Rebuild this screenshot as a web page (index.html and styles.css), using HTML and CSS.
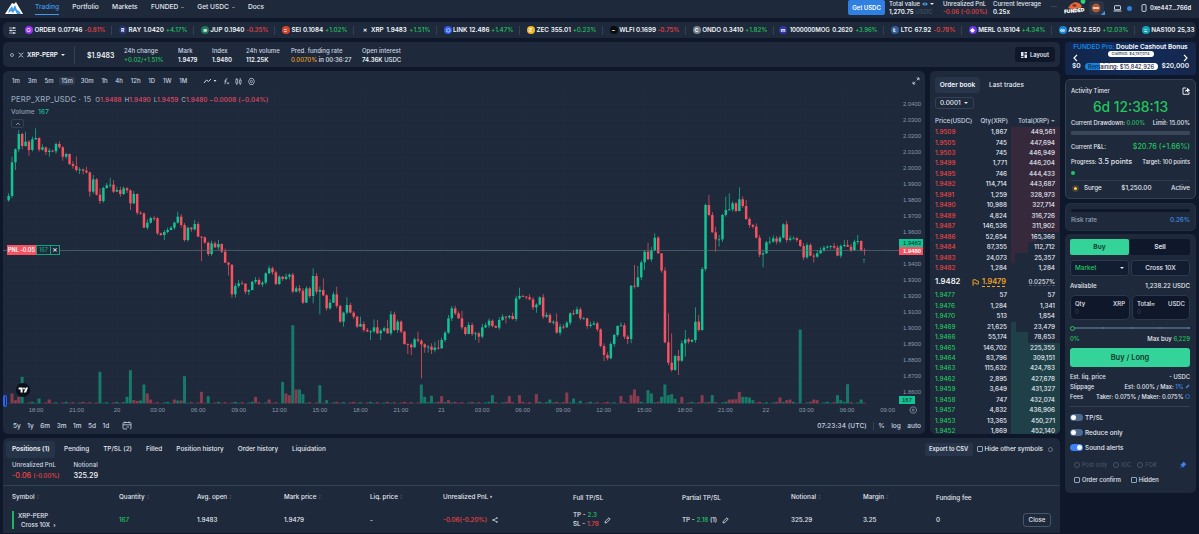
FILE: index.html
```
<!DOCTYPE html>
<html lang="en">
<head>
    <meta charset="UTF-8">
    <meta name="viewport" content="width=device-width, initial-scale=1.0">
    <title>XRP-PERP | Trading</title>
    <link rel="stylesheet" href="styles.css">
</head>
<body>
    <header class="topbar">
        <svg class="logo" viewBox="0 0 18 12"><path d="M0 12 7 1l2 1 2-2 7 12z" fill="#fff"/><path d="M4 8l3-4 1 3 2-4 2 5 2 1 2 3H3z" fill="#3f9bea"/><path d="M2 12l4-3 2 2 2-3 2 4z" fill="#fff"/></svg>
        <nav class="nav">
            <a class="active">Trading</a>
            <a>Portfolio</a>
            <a>Markets</a>
            <a>FUNDED <i class="chev"></i></a>
            <a>Get USDC <i class="chev"></i></a>
            <a>Docs</a>
        </nav>
        <button class="get-usdc">Get USDC</button>
        <div class="stats">
            <div><span>Total value <svg class="eye" viewBox="0 0 10 6"><ellipse cx="5" cy="3" rx="4.5" ry="2.7" fill="#4a9bea"/><circle cx="5" cy="3" r="1.2" fill="#1e293b"/></svg> <i class="caret"></i></span><b>1,270.75 <em>USDC</em></b></div>
            <div><span>Unrealized PnL</span><b class="red">-0.06 (-0.00%)</b></div>
            <div><span>Current leverage</span><b>0.25x</b></div>
        </div>
        <span class="more">···</span>
        <svg class="fox" viewBox="0 0 22 15"><path d="M4 8 7 4l4-2 4 1 3 3-2 3-3-1-3 2z" fill="#e5673c"/><path d="M8 5l3-1 2 2-3 1z" fill="#7b2f1d"/><circle cx="19" cy="1.5" r="2.4" fill="#2fd07d"/><text x="0" y="13" transform="rotate(-6 6 12)">FUNDED</text></svg>
        <div class="account">
            <svg class="avatar" viewBox="0 0 18 16"><rect x="1" y="1" width="15" height="14" rx="3" fill="#2b3547"/><circle cx="8" cy="8" r="4.4" fill="#a85a3a"/><path d="M5 7h6v2H5z" fill="#f0c4a0"/><path d="M17 11v4h-4z" fill="#4a9bea"/></svg>
            <svg class="laptop" viewBox="0 0 9 7"><rect x="1.5" y=".7" width="6" height="4" rx=".6" fill="none" stroke="#e2e8f0" stroke-width=".9"/><path d="M.5 6h8" stroke="#e2e8f0" stroke-width=".9"/></svg>
            <i class="net"></i>
            <svg class="phone" viewBox="0 0 6 8"><rect x="1" y=".6" width="4" height="6.8" rx=".8" fill="none" stroke="#e2e8f0" stroke-width=".9"/></svg>
            <b>0xe447...766d</b>
        </div>
    </header>

    <section class="ticker" id="ticker">
        <svg class="sliders" viewBox="0 0 7 7"><path d="M0 1h7M0 3.5h7M0 6h7" stroke="#cbd5e1" stroke-width=".8"/><path d="M4.8 0v2M2 2.5v2M4.8 5v2" stroke="#fff" stroke-width="1"/></svg>
    </section>

    <main class="layout">
        <div class="left">
            <section class="panel market">
                <span class="fav"></span>
                <span class="pair"><svg viewBox="0 0 6 6"><path d="M.6.6Q3 4 5.4.6M.6 5.4Q3 2 5.4 5.4" stroke="#cbd5e1" stroke-width=".8" fill="none"/></svg><b>XRP-PERP</b><i class="caret"></i></span>
                <b class="last">$1.9483</b>
                <div><span>24h change</span><span class="green">+0.02/+1.51%</span></div>
                <div><span>Mark</span><b>1.9479</b></div>
                <div><span>Index</span><b>1.9480</b></div>
                <div><span>24h volume</span><b>112.25K</b></div>
                <div><span>Pred. funding rate</span><span><em class="orange">0.0070%</em> in 00:36:27</span></div>
                <div><span>Open interest</span><span><b>74.36K</b> USDC</span></div>
                <button class="layout-btn"><svg viewBox="0 0 6 6"><path d="M0 0h2.5v4H0zM0 4.8h2.5V6H0zM3.5 0H6v1.6H3.5zM3.5 2.6H6V6H3.5z" fill="#e2e8f0"/></svg>Layout</button>
            </section>

            <div class="middle">
                <section class="panel chart">
                    <div class="toolbar">
                        <div class="frames"><span>1m</span><span>3m</span><span>5m</span><span class="on">15m</span><span>30m</span><span>1h</span><span>4h</span><span>12h</span><span>1D</span><span>1W</span><span>1M</span></div>
                        <div class="tools">
                            <svg class="t-line" viewBox="0 0 14 8"><path d="M1 6l2.5-3 2 1.5L8 2" fill="none" stroke="#cbd5e1" stroke-width="1"/><path d="M10.5 3h3L12 5z" fill="#cbd5e1"/></svg>
                            <svg viewBox="0 0 8 8"><path d="M5 .8Q3.2.4 3 2.5L2.2 7M1.5 3.5h2.8M4.8 5l2 2M6.8 5l-2 2" fill="none" stroke="#cbd5e1" stroke-width=".9"/></svg>
                            <svg viewBox="0 0 8 8"><path d="M2 0v8M6 0v8" stroke="#cbd5e1" stroke-width=".8"/><path d="M1 1.5h2v4.5H1zM5 2.5h2V6H5z" fill="#1e293b" stroke="#cbd5e1" stroke-width=".8"/></svg>
                            <svg viewBox="0 0 8 8"><path d="M2.3.6h3.4L7.5 4 5.7 7.4H2.3L.5 4z" fill="none" stroke="#cbd5e1" stroke-width=".8"/><circle cx="4" cy="4" r="1.3" fill="none" stroke="#cbd5e1" stroke-width=".8"/></svg>
                        </div>
                        <svg class="expand" viewBox="0 0 8 8"><path d="M4.8 3.2 7 1M4.8 1H7v2.2M3.2 4.8 1 7M1 4.8V7h2.2" fill="none" stroke="#cbd5e1" stroke-width=".9"/></svg>
                    </div>
                    <div class="plot">
                        <svg id="candles" width="922" height="327" viewBox="3 92 922 327"></svg>
                        <div class="legend">
                            <p class="ohlc"><span class="sym">PERP_XRP_USDC · 15</span> <i>O</i>1.9488 <i>H</i>1.9490 <i>L</i>1.9459 <i>C</i>1.9480 −0.0008 (−0.04%)</p>
                            <p class="vol">Volume <b>167</b></p>
                            <span class="fold"><svg viewBox="0 0 6 4"><path d="M1 3l2-2 2 2" fill="none" stroke="#94a3b8" stroke-width=".8"/></svg></span>
                        </div>
                        <div class="pnl-tag"><b>PNL -0.05</b><span>167</span><span class="x">×</span></div>
                        <svg class="tv" viewBox="0 0 14 14"><circle cx="7" cy="7" r="7" fill="#0b0f18"/><path d="M2.6 4.6h4v5h-2V6.4h-2z" fill="#fff"/><circle cx="8" cy="5.6" r="1" fill="#fff"/><path d="M9.8 4.6h2.3L10 9.6H7.8z" fill="#fff"/></svg>
                        <span class="handle"></span>
                    </div>
                    <div class="ranges">
                        <span>5y</span><span>1y</span><span>6m</span><span>3m</span><span>1m</span><span>5d</span><span>1d</span>
                        <svg viewBox="0 0 10 9"><path d="M5 8H2Q1 8 1 7V2.5Q1 1.5 2 1.5h6q1 0 1 1V7Q9 8 8 8M1 3.8h8M3 .4v2M7 .4v2M4.5 6H7" fill="none" stroke="#cbd5e1" stroke-width=".8"/></svg>
                        <span class="clock">07:23:34 (UTC)</span><span class="pct">%</span><span>log</span><span>auto</span>
                    </div>
                </section>

                <section class="panel book">
                    <div class="book-tabs"><b>Order book</b><span>Last trades</span></div>
                    <div class="tick">0.0001 <i class="caret"></i></div>
                    <div class="book-row head"><span>Price(USDC)</span><span>Qty(XRP)</span><span>Total(XRP) <i class="caret dim"></i></span></div>
                    <div id="asks"></div>
                    <div class="mid"><b>1.9482</b><span class="flag"><svg viewBox="0 0 7 7"><path d="M1 7V.8h3L4.6 2H6.4v3H4L3.5 4H1" fill="none" stroke="#f5a524" stroke-width=".9"/></svg><u>1.9479</u></span><em>0.0257%</em></div>
                    <div id="bids"></div>
                </section>
            </div>

            <section class="panel positions">
                <div class="tabs">
                    <b>Positions (1)</b><span>Pending</span><span>TP/SL (2)</span><span>Filled</span><span>Position history</span><span>Order history</span><span>Liquidation</span>
                    <button class="csv">Export to CSV</button>
                    <label><i class="box"></i>Hide other symbols</label><i class="ring"></i>
                </div>
                <div class="summary">
                    <div><span>Unrealized PnL</span><b class="red">-0.06 <small>(-0.00%)</small></b></div>
                    <div><span>Notional</span><b>325.29</b></div>
                </div>
                <div class="row th">
                    <span>Symbol <i>↕</i></span><span>Quantity <i>↕</i></span><span>Avg. open <i>↕</i></span><span>Mark price <i>↕</i></span><span>Liq. price <i>↕</i></span><span>Unrealized PnL <small>♦</small></span><span>Full TP/SL</span><span>Partial TP/SL</span><span>Notional <i>↕</i></span><span>Margin <i>↕</i></span><span>Funding fee</span>
                </div>
                <div class="row td">
                    <div class="symbol"><span>XRP-PERP</span><span>Cross 10X &nbsp;›</span></div>
                    <span class="green">167</span>
                    <span>1.9483</span>
                    <span>1.9479</span>
                    <span>-</span>
                    <span><em class="red">-0.06(-0.20%)</em><svg class="share" viewBox="0 0 6 6"><path d="M5 1 1.2 3 5 5" fill="none" stroke="#cbd5e1" stroke-width=".8"/><circle cx="5" cy="1" r=".8" fill="#cbd5e1"/><circle cx="1" cy="3" r=".8" fill="#cbd5e1"/><circle cx="5" cy="5" r=".8" fill="#cbd5e1"/></svg></span>
                    <div class="tpsl"><div><span>TP - <em class="green">2.3</em></span><span>SL - <em class="red">1.78</em></span></div><svg viewBox="0 0 7 7"><path d="M1 6l.4-1.8L5 .8 6.2 2 2.8 5.6z" fill="none" stroke="#e2e8f0" stroke-width=".8"/></svg></div>
                    <div class="tpsl"><span>TP - <em class="green">2.18</em> (1)</span><svg viewBox="0 0 7 7"><path d="M1 6l.4-1.8L5 .8 6.2 2 2.8 5.6z" fill="none" stroke="#e2e8f0" stroke-width=".8"/></svg></div>
                    <span>325.29</span>
                    <span>3.25</span>
                    <span>0</span>
                    <button class="close">Close</button>
                </div>
            </section>
        </div>

        <aside class="right">
            <section class="promo">
                <p><span>FUNDED Pro:</span> Double Cashout Bonus</p>
                <div class="promo-mid">
                    <svg viewBox="0 0 5 8"><path d="M4 .8 1 4l3 3.2" fill="none" stroke="#fff" stroke-width="1.2"/></svg>
                    <em>Claimed: $4,157,074</em>
                    <svg viewBox="0 0 5 8"><path d="M1 .8 4 4 1 7.2" fill="none" stroke="#fff" stroke-width="1.2"/></svg>
                </div>
                <div class="promo-bar"><b>$0</b><span>Remaining: $15,842,926</span><b>$20,000</b></div>
            </section>

            <section class="panel timer">
                <div class="line t-head"><span>Activity Timer</span><svg viewBox="0 0 8 8"><path d="M4 1H1v6.3h6V5" fill="none" stroke="#e2e8f0" stroke-width="1"/><path d="M3 5Q3 2.5 5 2.5V.8L8 3.3 5 5.5V4Q4 4 3 5z" fill="#fff"/></svg></div>
                <p class="count">6d 12:38:13</p>
                <div class="line dd"><span>Current Drawdown: <em class="green">0.00%</em></span><span>Limit: 15.00%</span></div>
                <div class="track"></div>
                <div class="line pl"><span>Current P&amp;L:</span><em class="green">$20.76 (+1.66%)</em></div>
                <div class="line prog"><span>Progress: <big>3.5 points</big></span><span>Target: 100 points</span></div>
                <i class="dot"></i>
                <div class="line surge"><span><i class="coin"></i>Surge</span><span>$1,250.00</span><span>Active</span></div>
            </section>

            <section class="panel risk">
                <div class="risk-bar"></div>
                <div class="line"><span>Risk rate</span><em class="blue">0.26%</em></div>
            </section>

            <section class="panel order">
                <div class="side"><button class="buy">Buy</button><button>Sell</button></div>
                <div class="pick"><span class="green">Market <i class="caret"></i></span><span>Cross 10X</span></div>
                <div class="line avail"><span>Available</span><span>1,238.22 USDC</span></div>
                <div class="inputs">
                    <div><span>Qty</span><span>XRP</span><em>0</em></div>
                    <div><span>Total≈</span><span>USDC</span><em>0</em></div>
                </div>
                <div class="slider"><i></i><s></s><s></s><s></s><s></s></div>
                <div class="line maxbuy"><em class="green">0%</em><span>Max buy <em class="green">6,229</em></span></div>
                <button class="long">Buy / Long</button>
                <div class="line fee"><span>Est. liq. price</span><span>- USDC</span></div>
                <div class="line fee"><span>Slippage</span><span>Est: 0.00% / Max: <em class="blue">1%</em> <svg class="edit" viewBox="0 0 7 7"><path d="M1 6l.4-1.8L5 .8 6.2 2 2.8 5.6z" fill="#3f8fe6"/></svg></span></div>
                <div class="line fee"><span>Fees</span><span>Taker: 0.075% / Maker: 0.075% <i class="ring blue"></i></span></div>
                <div class="toggles">
                    <label><i class="sw"></i>TP/SL</label>
                    <label><i class="sw"></i>Reduce only</label>
                    <label><i class="sw on"></i>Sound alerts</label>
                </div>
                <div class="tif"><label><i></i>Post only</label><label><i></i>IOC</label><label><i></i>FOK</label><svg viewBox="0 0 8 8"><path d="M4.5.5l3 3-1 .3-1.3 1.4-.2 1.6-1.6-1.5L.8 7.5 2.7 4.6 1.2 3l1.6-.2L4.2 1.5z" fill="#3b82f6"/></svg></div>
                <div class="checks"><label><i class="box"></i>Order confirm</label><label><i class="box"></i>Hidden</label></div>
            </section>
        </aside>
    </main>
    <script src="script.js"></script>
</body>
</html>
```
FILE: styles.css
```
* {
    box-sizing: border-box;
    margin: 0;
    padding: 0;
}

body {
    width: 1199px;
    height: 534px;
    overflow: hidden;
    background-color: #0f172a;
    color: #e2e8f0;
    font-family: Inter, "Liberation Sans", sans-serif;
    font-size: 6.4px;
    font-weight: 500;
    line-height: 8px;
    white-space: nowrap;
}

i, em { font-style: normal; }
b { font-weight: 600; color: #f1f5f9; }
svg { display: block; flex: none; }
button {
    border: 0;
    background: none;
    font: inherit;
    font-weight: 600;
    color: inherit;
    display: flex;
    align-items: center;
    justify-content: center;
}

.green { color: #22c55e; }
.red { color: #ef4444; }
.orange { color: #f5a524; }
.blue { color: #3f8fe6; }

.caret {
    display: inline-block;
    border: 2px solid transparent;
    border-top: 2.5px solid #e2e8f0;
    border-bottom: 0;
    vertical-align: middle;
}
.caret.dim { border-top-color: #94a3b8; }

.panel {
    background-color: #1e293b;
    border-radius: 5px;
}

/* top bar */
.topbar {
    display: flex;
    height: 18px;
    padding-left: 5px;
    background-color: #1e293b;
}
.logo { width: 18px; height: 12px; margin-top: 2px; }
.nav { display: flex; gap: 13.3px; margin-left: 12px; width: 813px; }
.nav a { height: 15px; line-height: 15px; font-size: 6.6px; color: #e2e8f0; }
.nav .active { color: #3f9bea; border-bottom: 1px solid #3f9bea; }
.chev {
    display: inline-block;
    width: 3px;
    height: 1px;
    margin-left: 1px;
    background-color: #64748b;
    vertical-align: middle;
}
.get-usdc {
    width: 37px;
    height: 15px;
    border-radius: 2px;
    background-color: #2f80e0;
    color: #fff;
    font-size: 6px;
}
.stats { display: grid; grid-template-columns: 54px 50px 58px; margin-left: 4px; font-size: 6px; }
.stats div { display: flex; flex-direction: column; }
.stats span { line-height: 8px; display: flex; align-items: center; gap: 2px; }
.stats b { line-height: 8px; font-size: 6.1px; }
.stats b.red { color: #ef4444; font-weight: 500; }
.stats em { color: #3d4a5f; }
.eye { width: 6px; height: 4px; }
.more { color: #64748b; line-height: 15px; width: 12px; }
.fox { width: 22px; height: 15px; margin-left: 1px; }
.fox text { font: 900 5px Inter, sans-serif; fill: #fff; }
.account { display: flex; align-items: center; height: 16px; width: 110px; margin-left: 2px; }
.avatar { width: 18px; height: 16px; }
.laptop { width: 9px; height: 7px; margin-left: 7px; }
.net { width: 5px; height: 5px; border-radius: 50%; background-color: #2f80e0; margin-left: 5px; }
.phone { width: 6px; height: 8px; margin-left: 9px; }
.account b { margin-left: 3px; font-size: 5.9px; }

/* ticker */
.ticker {
    display: grid;
    grid-template-columns: 14px 94px 82px 81px 79px 83px 83px 83px 83px 88px 110px 78px 90px 83px 66px;
    align-items: center;
    height: 16px;
    margin: 4px 3px 0;
    overflow: hidden;
    background-color: #1e293b;
    border-radius: 5px;
}
.sliders { width: 7px; height: 7px; margin-left: 6px; }
.coin-item {
    display: flex;
    justify-content: space-between;
    align-items: center;
    height: 9px;
    padding: 0 5.5px 0 6.5px;
    border-left: 1px solid #334155;
    font-size: 6.3px;
    letter-spacing: -.05px;
}
.coin-item:nth-child(2) { border-color: transparent; }
.coin-item:nth-child(11) { font-size: 6px; padding-left: 5px; letter-spacing: -.1px; }
.coin-item span { font-weight: 500; }
.token { width: 8px; height: 8px; border-radius: 50%; display: grid; place-items: center; font-size: 5px; font-weight: 700; color: #fff; }

/* columns */
.layout { display: grid; grid-template-columns: 1057px 131px; gap: 5px; margin: 4px 3px 0; }
.left { display: grid; grid-template-rows: 25px 363px 95px; gap: 4px; }
.middle { display: grid; grid-template-columns: 922px 130px; gap: 5px; }
.right { display: flex; flex-direction: column; }

.market {
    display: grid;
    grid-template-columns: 9px 57px 49px 54px 34px 34px 45px 71px 1fr 40px;
    padding: 4px 5px 0 6px;
    font-size: 6px;
}
.market div { display: flex; flex-direction: column; line-height: 9px; }
.market div > span:first-child { color: #cbd5e1; }
.fav { width: 4px; height: 4px; border: 1px solid #94a3b8; border-radius: 50%; margin: 7px 0 0 1px; }
.pair { display: flex; align-items: center; height: 18px; border-right: 1px solid #334155; }
.pair svg { width: 6px; height: 6px; margin-right: 3px; }
.pair b { margin-right: 3px; font-size: 6.3px; letter-spacing: -.1px; }
.last { line-height: 19px; font-size: 6.9px; padding-left: 12px; }
.layout-btn { height: 15px; margin-top: 1px; border-radius: 3px; background-color: #0f172a; gap: 3px; font-size: 5.8px; }
.layout-btn svg { width: 6px; height: 6px; }

/* chart */
.chart { overflow: hidden; }
.toolbar { display: flex; height: 20px; align-items: center; color: #cbd5e1; padding-left: 9px; }
.frames { display: flex; gap: 7.8px; width: 188px; font-size: 6px; }
.frames .on { background-color: #2d3a4f; border-radius: 2px; padding: 0 2px; margin: 0 -2px; }
.tools { display: flex; gap: 5.5px; align-items: center; flex: 1; padding-left: 3px; }
.tools svg { width: 7px; height: 7px; }
.tools .t-line { width: 14px; height: 8px; }
.expand { width: 8px; height: 8px; margin-right: 5px; }
.plot { position: relative; height: 327px; margin-top: 1px; }
.plot text { font: 400 5.9px "Liberation Sans", sans-serif; fill: #8b99ad; }
.plot text.dark { fill: #06281f; }
.plot text.light { fill: #fff; font-weight: 700; }
.legend { position: absolute; left: 8px; top: 3px; color: #94a3b8; }
.ohlc { font-size: 6.4px; line-height: 10px; color: #e04a68; letter-spacing: .1px; }
.ohlc i { color: #94a3b8; margin-left: 1px; }
.sym { font-size: 7.6px; color: #94a3b8; letter-spacing: .2px; margin-right: 1px; }
.vol { line-height: 14px; letter-spacing: .1px; }
.vol b { color: #14c393; font-weight: 500; margin-left: 2px; }
.fold { display: grid; place-items: center; width: 13px; height: 9px; border: 1px solid #334155; border-radius: 2px; }
.fold svg { width: 6px; height: 4px; }
.pnl-tag { position: absolute; left: 4px; top: 153px; display: flex; height: 10px; font-size: 5.5px; line-height: 8px; text-align: center; }
.pnl-tag b { width: 29px; background-color: #f7525f; color: #fff; line-height: 10px; }
.pnl-tag span { width: 15px; border: 1px solid #14a37f; background-color: #1e293b; color: #14a37f; }
.pnl-tag .x { width: 10px; margin-left: -1px; color: #e2e8f0; font-size: 8px; line-height: 7px; }
.tv { position: absolute; left: 13px; top: 291px; width: 14px; height: 14px; }
.handle { position: absolute; left: 0; top: 303px; width: 4px; height: 12px; border: 1px solid #2962ff; border-left-width: 2px; border-radius: 2px; }
.ranges { display: flex; gap: 6.5px; height: 13px; align-items: center; padding: 0 4px 0 10px; font-size: 6.5px; color: #cbd5e1; }
.ranges svg { width: 10px; height: 9px; margin-left: 6px; }
.clock { margin-left: auto; letter-spacing: .1px; }
.pct { border-left: 1px solid #334155; padding-left: 4px; }

/* order book */
.book { overflow: hidden; padding-top: 6px; }
.book-tabs { display: flex; height: 16px; line-height: 16px; padding-left: 5px; gap: 4px; font-size: 6.6px; }
.book-tabs b { width: 45px; text-align: center; border-radius: 3px; background-color: #273449; }
.book-tabs span { padding-left: 5px; }
.tick { display: flex; align-items: center; justify-content: space-between; width: 39px; height: 12px; margin: 3.5px 0 5px 5px; padding: 0 5px 0 4px; border: 1px solid #334155; border-radius: 3px; }
.book-row { display: grid; grid-template-columns: 39px 33px 53px; height: 10.46px; line-height: 10.4px; padding-left: 5px; font-size: 6.3px; }
.book-row span:nth-child(n+2) { text-align: right; }
.book-row.head { height: 13.6px; line-height: 14px; color: #cbd5e1; font-size: 6.2px; grid-template-columns: 42px 31px 47px; }
.book-row .depth { margin-left: 4px; padding-right: 5px; }
.mid { display: grid; grid-template-columns: 37px 40px 43px; align-items: center; height: 16.8px; padding: 1px 0 0 5px; font-size: 7.7px; }
.flag { display: flex; gap: 3px; align-items: center; color: #f5a524; font-size: 7.4px; font-weight: 600; }
.flag svg { width: 7px; height: 7px; }
.flag u { text-decoration: underline dashed .6px; text-underline-offset: 2px; }
.mid em { justify-self: end; font-size: 6.1px; line-height: 7px; border-bottom: 1px dashed #475569; }

/* positions */
.positions { border-radius: 5px 5px 0 0; }
.tabs { display: flex; align-items: center; height: 22px; padding: 0 7px 0 3px; gap: 14px; font-size: 6.42px; }
.tabs b { height: 17px; line-height: 17px; padding: 0 5px 0 6px; margin-right: -4.5px; border-radius: 3px; background-color: #263449; }
.tabs label { display: flex; align-items: center; gap: 2px; margin-left: -10px; font-size: 6.3px; }
.csv { width: 48px; height: 13px; margin-left: auto; background-color: #283449; border-radius: 2px; font-size: 5.8px; }
.box { display: inline-block; width: 6px; height: 6px; border: 1px solid #94a3b8; border-radius: 1px; }
.ring { display: inline-block; width: 5px; height: 5px; margin-left: -9px; border: 1px solid #64748b; border-radius: 50%; }
.ring.blue { margin: 0; border-color: #2f6fb3; vertical-align: middle; }
.summary { display: flex; gap: 14px; height: 26px; padding: 1px 0 0 9px; border-bottom: 1px solid #334155; }
.summary div { display: flex; flex-direction: column; font-size: 6.1px; color: #cbd5e1; }
.summary b { font-size: 7.3px; line-height: 13px; font-weight: 500; }
.summary b.red { color: #ef4444; }
.summary small { font-size: 6px; }
.row { display: grid; grid-template-columns: 107px 78px 87px 86px 73px 130px 109px 109px 72px 73px 87px 28px; padding-left: 9px; align-items: center; font-size: 6.3px; }
.th { height: 23px; }
.th i { color: #475569; font-size: 4px; vertical-align: middle; }
.th small { font-size: 4px; vertical-align: middle; }
.td { height: 22px; }
.td > span { display: flex; align-items: center; gap: 5px; }
.symbol { display: flex; flex-direction: column; height: 18px; line-height: 9px; padding-left: 4px; border-left: 2px solid #26b35f; font-size: 6.1px; }
.symbol span + span { padding-left: 3px; }
.share { width: 6px; height: 6px; }
.tpsl { display: flex; align-items: center; gap: 5px; }
.tpsl div { display: flex; flex-direction: column; line-height: 9px; }
.tpsl svg { width: 7px; height: 7px; }
.close { height: 14px; border: 1px solid #475569; border-radius: 3px; font-weight: 500; font-size: 6.2px; }

/* right column */
.line { display: flex; justify-content: space-between; align-items: center; }
.promo { height: 33px; border-radius: 3px; background: linear-gradient(90deg, #13264a, #112c5c 60%, #17264a); color: #fff; text-align: center; padding: 1px 7px 0; }
.promo p { font-size: 6.5px; font-weight: 600; line-height: 8px; }
.promo p span { color: #1684e0; }
.promo-mid { display: flex; justify-content: space-between; height: 10px; padding: 0 1px; }
.promo-mid svg { width: 5px; height: 8px; margin-top: 3px; }
.promo-mid em { width: 46px; height: 6px; line-height: 6px; border-radius: 3px; background-color: #fff; color: #334155; font-size: 4px; }
.promo-bar { display: flex; justify-content: space-between; align-items: center; margin-top: 1px; }
.promo-bar b { font-size: 6.6px; }
.promo-bar span { width: 73px; height: 7px; line-height: 7px; border-radius: 4px; background: linear-gradient(90deg, #1684e0 20%, #fff 20%); color: #16233c; font-size: 5.7px; }

.timer { height: 120px; margin-top: 4px; padding: 6px 5px 0; border: 1px solid #334155; font-size: 5.8px; }
.t-head { height: 9px; }
.t-head svg { width: 8px; height: 8px; }
.count { height: 24px; line-height: 24px; text-align: center; font-size: 13.8px; color: #22c55e; }
.dd { height: 8px; }
.track { height: 4px; margin-top: 4px; background-color: #3a475b; border-radius: 1px; }
.pl { height: 10px; margin-top: 7px; }
.pl em { font-size: 7.2px; }
.prog { height: 10px; margin-top: 5px; font-size: 5.6px; }
.prog big { font-size: 7.2px; }
.dot { display: block; width: 4px; height: 4px; margin-top: 4px; border-radius: 50%; background-color: #22c55e; }
.surge { height: 15px; margin-top: 5px; border-top: 1px solid #2c394e; font-size: 6.3px; }
.surge > span:first-child { display: flex; align-items: center; }
.coin { width: 7px; height: 7px; border: 2px solid #453f38; border-radius: 50%; background-color: #ffd43b; margin: 0 5px 0 1px; }

.risk { height: 28px; margin-top: 4px; padding: 5px 5px 0; color: #94a3b8; font-size: 6.3px; border: 1px solid #233047; }
.risk-bar { height: 3px; background-color: #0f172a; border-radius: 2px; margin-bottom: 4px; }

.order { height: 259px; margin-top: 3px; padding: 5px 6px 0 5px; }
.side { display: grid; grid-template-columns: 59px 1fr; gap: 1px; }
.side button { height: 16px; border-radius: 2px; background-color: #0f172a; font-size: 6.6px; }
.side .buy { background-color: #34d399; color: #10382c; }
.pick { display: grid; grid-template-columns: 59px 1fr; gap: 2px; margin-top: 5px; }
.pick span { height: 16px; line-height: 14px; border: 1px solid #2b384d; border-radius: 3px; background-color: #131d31; text-align: center; font-size: 6.4px; }
.pick .green { display: flex; align-items: center; justify-content: space-between; padding: 0 4px; }
.avail { height: 19px; font-size: 6.2px; }
.inputs { display: grid; grid-template-columns: 60px 1fr; gap: 2px; }
.inputs div { display: grid; grid-template-columns: 1fr auto; align-content: start; height: 25px; padding: 4px 4px 0; border: 1px solid #2b384d; border-radius: 5px; background-color: #0f172a; font-size: 6px; line-height: 7.5px; }
.inputs em { color: #334155; }
.slider { display: flex; align-items: center; justify-content: space-between; height: 2px; margin: 7px 0 5px; background-color: #475a73; }
.slider i { width: 5px; height: 5px; border: 1px solid #22c55e; border-radius: 50%; background-color: #1e293b; }
.slider s { width: 2px; height: 2px; border-radius: 50%; background-color: #5b6e88; }
.maxbuy { height: 9px; font-size: 6px; }
.long { width: 100%; height: 19px; margin: 5px 0 4.5px; border-radius: 3px; background-color: #34d399; color: #10382c; font-size: 7.5px; }
.fee { height: 10px; font-size: 5.8px; }
.edit { display: inline-block; width: 5px; height: 5px; vertical-align: middle; }
.toggles { margin-top: 4.5px; padding-top: 3px; border-top: 1px solid #334155; }
.toggles label { display: flex; align-items: center; height: 15px; gap: 2px; }
.sw { width: 13px; height: 7px; border-radius: 4px; background-color: #4e6b8f; padding: 1px; }
.sw::before { content: ""; display: block; width: 5px; height: 5px; border-radius: 50%; background-color: #fff; }
.sw.on { background-color: #3b82f6; }
.sw.on::before { margin-left: auto; }
.tif { display: flex; gap: 6px; height: 18px; align-items: center; padding: 2px 3px 0 4px; color: #475569; font-size: 5.7px; }
.tif label { display: flex; align-items: center; gap: 2px; }
.tif i { width: 6px; height: 6px; border: 1px solid #475569; border-radius: 50%; }
.tif svg { width: 8px; height: 8px; margin-left: auto; }
.checks { display: flex; gap: 10px; padding: 3px 3px 0 4px; font-size: 5.8px; }
.checks label { display: flex; align-items: center; gap: 2px; }
```
FILE: script.js
```
// ---- ticker strip: name, price, change, icon colour, icon glyph
var coins = [
    ["ORDER", "0.07746", "-0.81%", "#9b34f0", "○"],
    ["RAY", "1.0420", "+4.17%", "#27337a", "R"],
    ["JUP", "0.1940", "-0.35%", "#1d7a5c", "≋"],
    ["SEI", "0.1084", "+1.02%", "#d8452f", "≈"],
    ["XRP", "1.9483", "+1.51%", "transparent", "✕"],
    ["LINK", "12.486", "+1.47%", "#2f5bea", "⬡"],
    ["ZEC", "355.01", "+0.23%", "#f4b728", "Z"],
    ["WLFI", "0.1699", "-0.75%", "#0b0b0b", "~"],
    ["ONDO", "0.3410", "+1.82%", "#7a828c", "C"],
    ["1000000MOG", "0.2620", "+3.96%", "#3137a8", "m"],
    ["LTC", "67.92", "-0.78%", "#345d9d", "Ł"],
    ["MERL", "0.16104", "+4.34%", "#6a36e8", "◆"],
    ["AXS", "2.550", "+12.03%", "#1688e0", "∞"],
    ["NAS100", "25,33", "", "#14a3b8", "="]
];
var ticker = document.getElementById("ticker");
coins.forEach(function (c) {
    var tone = c[2].charAt(0) === "-" ? "red" : "green";
    ticker.insertAdjacentHTML("beforeend",
        '<div class="coin-item"><i class="token" style="background:' + c[3] + '">' + c[4] + '</i><b>' + c[0] +
        '</b><b>' + c[1] + '</b>' + (c[2] ? '<span class="' + tone + '">' + c[2] + '</span>' : '') + '</div>');
});

// ---- order book: price, qty, total
var asks = "1.9509 1,867 449,561|1.9505 745 447,694|1.9503 745 446,949|1.9499 1,771 446,204|1.9495 746 444,433|1.9492 114,714 443,687|1.9491 1,259 328,973|1.9490 10,988 327,714|1.9489 4,824 316,726|1.9487 146,536 311,902|1.9486 52,654 165,366|1.9484 87,355 112,712|1.9483 24,073 25,357|1.9482 1,284 1,284";
var bids = "1.9477 57 57|1.9476 1,284 1,341|1.9470 513 1,854|1.9469 21,625 23,479|1.9466 55,174 78,653|1.9465 146,702 225,355|1.9464 83,796 309,151|1.9463 115,632 424,783|1.9462 2,895 427,678|1.9459 3,649 431,327|1.9458 747 432,074|1.9457 4,832 436,906|1.9453 13,365 450,271|1.9452 1,869 452,140";

function fillBook(id, rows, tone, colour, full) {
    var html = "";
    rows.split("|").forEach(function (r) {
        var c = r.split(" ");
        var pct = Math.min(100, parseInt(c[2].replace(",", ""), 10) / full * 100);
        html += '<div class="book-row"><span class="' + tone + '">' + c[0] + '</span><span>' + c[1] +
            '</span><span class="depth" style="background:linear-gradient(90deg,' + colour + ' ' + pct + '%,transparent ' + pct + '%)">' + c[2] + '</span></div>';
    });
    document.getElementById(id).innerHTML = html;
}
fillBook("asks", asks, "red", "#36293b", 320000);
fillBook("bids", bids, "green", "#1f4046", 225000);

// ---- candles: close[,high[,low]] in thirds of a pixel below y=130, open = previous close
var raw = "198,190,215 97,80 58,55,120 12,0 48,8,58 35,5 60,30,77 28,20 24,-5 59 52 66,50,75 62,55,80 64 42,38 52 80,48,92 72 102 108 120,80 118,112,132 122,116,133 127,110 185,125,200 148,135 194 213,175 174,170 166 164,143 185,150 180 192,170,200 175 181 220,178,240 192 248,190,255 250 293 278 264,260 265 310 315 306,300,330 300 293 278 260,245 285 330 293,290,335 298 282,270 320 322,318,393 338 372,335,378 340 352 342,330 365 398 404,395,437 493,404,503 468,460,503 460 461 485,460,492 480,478,495 455 450 463 458 430 415,407 427,410 462 440,436,465 447 440 434,430 485 475,468 482 518 475 498 438,415,520 485 480,470,553 " +
    "496,445 535 518 493 528,470 575 548,545,590 525,502 548 560 590 582,560 600 604 604,600,630 592,568 610,570 602,598,630 595 610,570 553 600 575 605 642 644,640,672 652,640,675 628 632,605 643,628,745 652,640,668 650,645,668 660,640,672 653,635 655,630 630 608 565,555 535,528 550 565 592,542 612 585 612 610,605,630 620,605,638 592 586 572,565 588 593 570 560 562,558,580 558 567 505 498,473 500 502 508 532 524,520,548 502 560 555 578 575 608,550 590 592 578 550 552 538,530 565 565 588 584 580 598 648 675,640,693 685 642 615 588 586 620 627,615,642 467,465,640 470,405 442,408 " +
    "397 365,360,420 388,338 360 323,310 370 422,375 637 698,550 720,610 678 692,660,735 640 628,600,680 635 630 575,532 600,555 417 225 255,195 307 328,290,365 328,315,350 255 240,200 238,190 220 243 208,172 228 267,210 285 290 323 374 370,360,412 337 335,320 325 335 323 283 330 325 325 330 348 382 345 377 380,370,397 370 360 353 350 348 353 377 348 345,330 350,330 360 335 333,315 360 363,355,376";

// volume heights in thirds of a pixel, negative = red bar
var volumes = { 1: -30, 2: -10, 3: -20, 4: 80, 9: 15, 12: -12, 27: 95, 35: 20, 36: 100, 37: -10, 38: -8, 39: 9, 40: 57, 41: -30, 42: -12, 49: -12, 50: 9, 51: -9, 52: 82, 57: -35, 59: 22, 73: -20, 77: -12, 81: 65, 82: -30, 83: -25, 84: 235, 85: -42, 86: 42, 87: 28, 92: 55, 94: 10, 122: 57, 123: 20, 125: 23, 128: -22, 130: -10, 143: 25, 148: -22, 151: -25, 156: -28, 160: 12, 165: -33, 167: 15, 169: 8, 181: -22, 184: -25, 185: -42, 186: -22, 189: 40, 190: 30, 193: 20, 194: 57, 195: 25, 196: 28, 197: 14, 199: -20, 205: -25, 208: 25, 213: -12, 214: -12, 215: -13, 216: -35, 217: 20, 218: 20, 219: 18, 220: 10, 228: -18, 230: -10, 231: -12, 234: 222, 238: -12, 239: -10, 245: 25, 246: 10, 248: 58, 252: 12 };

var UP = "#14c393", DOWN = "#f7525f", STEP = 3.383;
var svg = "", prev = 211;

function rect(x, y, w, h, fill) {
    return '<rect x="' + x.toFixed(2) + '" y="' + y.toFixed(2) + '" width="' + w + '" height="' + h.toFixed(2) + '" fill="' + fill + '"/>';
}

// grid and axis labels
for (var k = 0; k < 22; k++) {
    var gx = 36 + k * 40.55;
    var hour = (18 + k * 3) % 24;
    var label = hour === 0 ? String(20 + (k - 2) / 8) : (hour < 10 ? "0" : "") + hour + ":00";
    svg += rect(gx, 92, .6, 311, "#222e41");
    svg += '<text x="' + gx + '" y="412" text-anchor="middle">' + label + '</text>';
}
for (var p = 0; p < 19; p++) {
    var gy = 104 + p * 16;
    svg += rect(3, gy, 893, .6, "#222e41");
    if (p !== 9) {
        svg += '<text x="921" y="' + (gy + 2) + '" text-anchor="end">' + (2.04 - p * .01).toFixed(4) + '</text>';
    }
}

raw.split(" ").forEach(function (item, i) {
    var v = item.split(",").map(Number);
    var close = v[0];
    var top = Math.min(prev, close), bottom = Math.max(prev, close);
    var high = v.length > 1 ? Math.min(v[1], top) : top - 2 - i * 7 % 9;
    var low = v.length > 2 ? Math.max(v[2], bottom) : bottom + 1 + i * 5 % 8;
    var colour = close <= prev ? UP : DOWN;
    var x = 9 + i * STEP - .4;
    var vol = volumes[i] || (i * 7 % 5 + 1) * (close <= prev ? 1 : -1);
    svg += rect(x - 1.5, 403.5 - Math.abs(vol) / 3, 3, Math.abs(vol) / 3, vol > 0 ? "#177967" : "#8a3c4f");
    svg += rect(x - .3, 130 + high / 3, .7, (low - high) / 3, colour);
    svg += rect(x - 1.2, 130 + top / 3, 2.5, Math.max((bottom - top) / 3, .9), colour);
    prev = close;
});

// position line, price tags, volume tag, settings glyph
svg += rect(3, 250, 896, .7, "#56706f");
svg += '<path d="M864 263v-4m-1 1 1-1 1 1" stroke="#14a37f" stroke-width=".7" fill="none"/>';
svg += rect(899, 239, 24, 8, UP) + '<text class="dark" x="921" y="245" text-anchor="end">1.9483</text>';
svg += rect(899, 247, 24, 8, DOWN) + '<text class="light" x="921" y="253" text-anchor="end">1.9480</text>';
svg += rect(899, 396, 16, 8, UP) + '<text class="dark" x="907" y="402" text-anchor="middle">167</text>';
svg += '<path d="M911.5 407h3.5l1.8 3-1.8 3h-3.5l-1.8-3z" fill="none" stroke="#94a3b8" stroke-width=".7"/><circle cx="913.2" cy="410" r="1" fill="none" stroke="#94a3b8" stroke-width=".7"/>';
document.getElementById("candles").innerHTML = svg;
```
